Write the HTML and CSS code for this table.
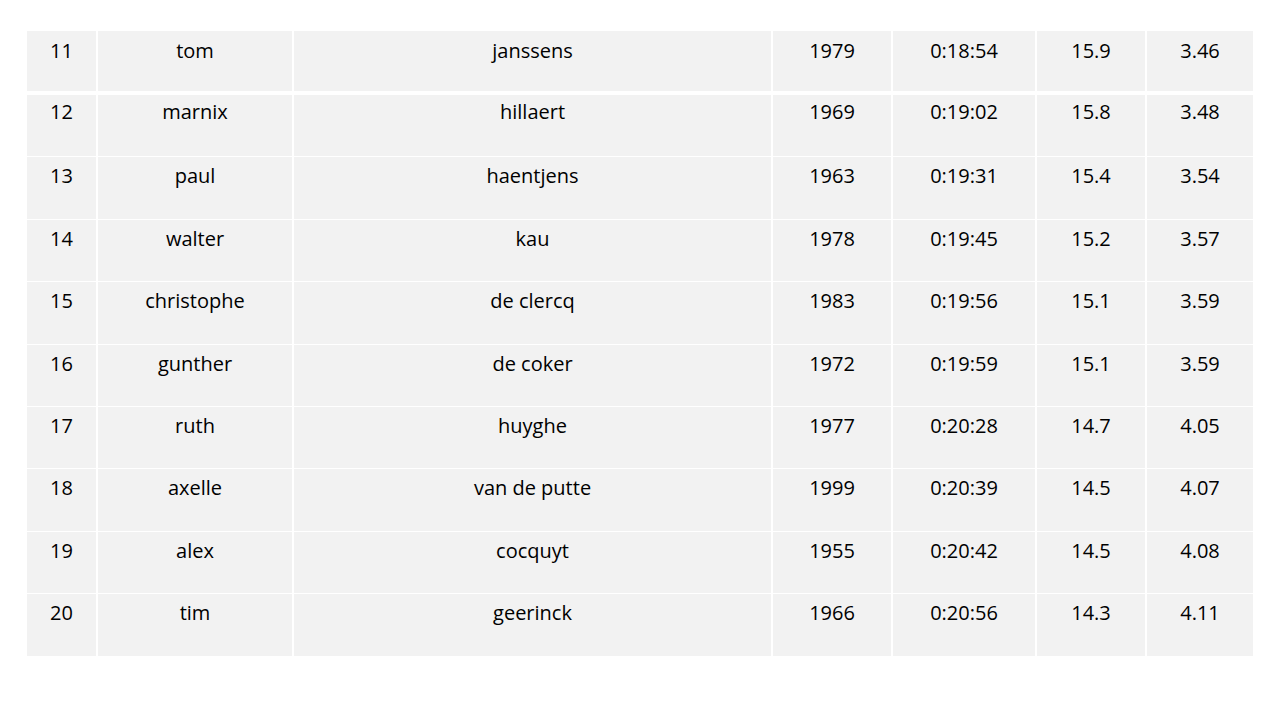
FILE: index.html
```html
<!DOCTYPE html>
<html>
<head>
<meta charset="utf-8">
<link rel="stylesheet" href="styles.css">
</head>
<body>
<div class="slide">
<table class="results">
<colgroup>
<col class="c1"><col class="c2"><col class="c3"><col class="c4"><col class="c5"><col class="c6"><col class="c7">
</colgroup>
<tbody>
<tr class="first"><td>11</td><td>tom</td><td>janssens</td><td>1979</td><td>0:18:54</td><td>15.9</td><td>3.46</td></tr>
<tr class="second"><td>12</td><td>marnix</td><td>hillaert</td><td>1969</td><td>0:19:02</td><td>15.8</td><td>3.48</td></tr>
<tr><td>13</td><td>paul</td><td>haentjens</td><td>1963</td><td>0:19:31</td><td>15.4</td><td>3.54</td></tr>
<tr><td>14</td><td>walter</td><td>kau</td><td>1978</td><td>0:19:45</td><td>15.2</td><td>3.57</td></tr>
<tr><td>15</td><td>christophe</td><td>de clercq</td><td>1983</td><td>0:19:56</td><td>15.1</td><td>3.59</td></tr>
<tr><td>16</td><td>gunther</td><td>de coker</td><td>1972</td><td>0:19:59</td><td>15.1</td><td>3.59</td></tr>
<tr><td>17</td><td>ruth</td><td>huyghe</td><td>1977</td><td>0:20:28</td><td>14.7</td><td>4.05</td></tr>
<tr><td>18</td><td>axelle</td><td>van de putte</td><td>1999</td><td>0:20:39</td><td>14.5</td><td>4.07</td></tr>
<tr><td>19</td><td>alex</td><td>cocquyt</td><td>1955</td><td>0:20:42</td><td>14.5</td><td>4.08</td></tr>
<tr><td>20</td><td>tim</td><td>geerinck</td><td>1966</td><td>0:20:56</td><td>14.3</td><td>4.11</td></tr>
</tbody>
</table>
</div>
</body>
</html>
```
FILE: styles.css
```css
html, body {
  margin: 0;
  padding: 0;
  background: #ffffff;
}
.slide {
  width: 1280px;
  height: 720px;
  padding: 31px 0 0 27px;
  box-sizing: border-box;
}
.results {
  border-collapse: separate;
  border-spacing: 0;
  table-layout: fixed;
  width: 1226px;
  font-family: "Open Sans", "Liberation Sans", sans-serif;
  font-size: 20px;
  color: #000000;
}
.c1 { width: 69px; }
.c2 { width: 196px; }
.c3 { width: 479px; }
.c4 { width: 120px; }
.c5 { width: 144px; }
.c6 { width: 110px; }
.c7 { width: 108px; }
.results td {
  background: #f2f2f2;
  text-align: center;
  vertical-align: top;
  height: 62.4px;
  padding: 6px 0 0 0;
  box-sizing: border-box;
  line-height: 26px;
  border-left: 2px solid #ffffff;
  border-top: 1px solid #ffffff;
}
.results td:first-child {
  border-left: none;
}
.results tr.first td {
  border-top: none;
  border-bottom: 4px solid #ffffff;
  height: 64px;
  padding-top: 7px;
}
.results tr.second td {
  border-top: none;
  height: 61.4px;
  padding-top: 4px;
}
```
